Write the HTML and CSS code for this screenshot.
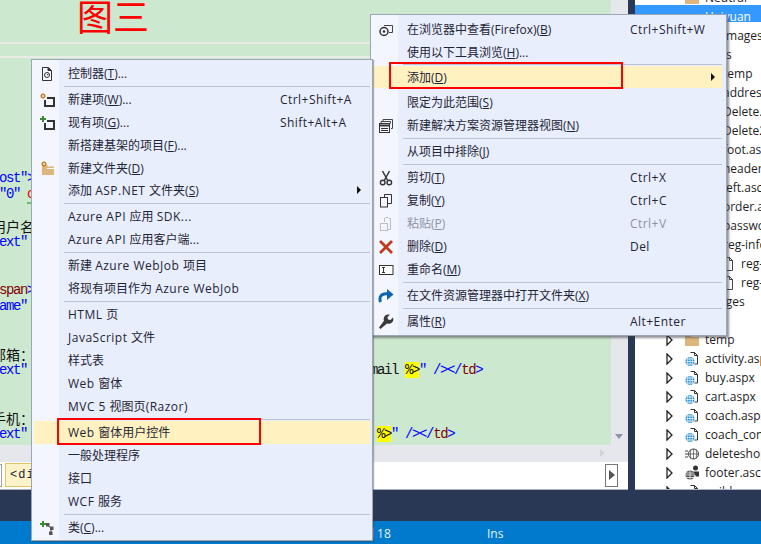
FILE: index.html
```html
<!DOCTYPE html>
<html lang="zh-CN">
<head>
<meta charset="utf-8">
<title>添加 Web 窗体用户控件</title>
<link rel="stylesheet" href="styles.css">
</head>
<body>
<svg class="defs" width="0" height="0" aria-hidden="true">
  <symbol id="page" viewBox="0 0 14 16">
    <path d="M5.500 1.500h4l3 3v8.500h-3M9.500 1.500v3h3" fill="none" stroke="#333" stroke-width="1"/>
    <circle cx="5" cy="10.500" r="4.500" fill="#1e88d0"/>
    <path d="M.5 10.500h9M.8 8h8.400M.8 13h8.400M5 6v9M3 6.500q-1 4 0 8M7 6.500q1 4 0 8" fill="none" stroke="#fff" stroke-width=".7"/>
  </symbol>
  <symbol id="tw" viewBox="0 0 7 12">
    <path d="M1 1l5 5-5 5z" fill="#fff" stroke="#222" stroke-width="1.300"/>
  </symbol>
  <symbol id="folder" viewBox="0 0 14 13">
    <path d="M0 2h5l1 2h8v9H0z" fill="#dcb67a"/>
  </symbol>
  <symbol id="doc" viewBox="0 0 14 16">
    <path d="M3.500 1.500h5l3 3v10h-8zM8.500 1.500v3h3" fill="#fff" stroke="#444"/>
  </symbol>
</svg>

<div class="app">
  <div class="main">
    <section class="editor">
      <div class="editor-top">
        <div class="code">
          <div class="curline"></div>
          <div class="lines">
            <div class="ln"><span class="b">ost"&gt;</span></div>
            <div class="ln"><span class="b">"0" </span><span class="err">c</span></div>
            <div class="ln"></div>
            <div class="ln"><span class="cn">用户名</span></div>
            <div class="ln"><span class="b">ext"</span></div>
            <div class="ln"></div>
            <div class="ln"></div>
            <div class="ln"><span class="m">span</span><span class="b">&gt;</span></div>
            <div class="ln"><span class="b">ame"</span></div>
            <div class="ln"></div>
            <div class="ln"></div>
            <div class="ln"><span class="cn">邮箱：</span></div>
            <div class="ln"><span class="b">ext"</span>                                                 mail <span class="y">%&gt;</span><span class="b">" /&gt;&lt;/</span><span class="m">td</span><span class="b">&gt;</span></div>
            <div class="ln"></div>
            <div class="ln"></div>
            <div class="ln"><span class="cn">手机：</span></div>
            <div class="ln"><span class="b">ext"</span>                                                  <span class="y">%&gt;</span><span class="b">" /&gt;&lt;/</span><span class="m">td</span><span class="b">&gt;</span></div>
          </div>
        </div>
        <div class="vscroll"><i class="tri-down"></i></div>
      </div>
      <div class="hscroll"><i class="tri-right"></i></div>
      <div class="navbar">
        <div class="nav-left"></div>
        <div class="tag">&lt;div&gt;</div>
        <div class="nav-btn"><i class="tri-nav"></i></div>
      </div>
    </section>

    <aside class="explorer">
      <div class="tree">
        <div class="row"><span class="tw"></span><svg class="ic" width="14" height="13"><use href="#folder"/></svg><span>Neutral</span></div>
        <div class="row sel"><span class="tw"></span><span class="ic"></span><span>Haiyuan</span></div>
        <div class="row l2"><span>images</span></div>
        <div class="row l2"><span>js</span></div>
        <div class="row l2"><span>temp</span></div>
        <div class="row l2"><span>address.aspx</span></div>
        <div class="row l2"><span>Delete.aspx</span></div>
        <div class="row l2"><span>Delete2.aspx</span></div>
        <div class="row l2"><span>foot.ascx</span></div>
        <div class="row l2"><span>header.ascx</span></div>
        <div class="row l2"><span>left.ascx</span></div>
        <div class="row l2"><span>order.aspx</span></div>
        <div class="row l2"><span>password.aspx</span></div>
        <div class="row l2"><span>reg-info.aspx</span></div>
        <div class="row l3"><svg class="ic" width="14" height="16"><use href="#doc"/></svg><span>reg-info.aspx.cs</span></div>
        <div class="row l3"><svg class="ic" width="14" height="16"><use href="#doc"/></svg><span>reg-info.designer.cs</span></div>
        <div class="row"><span class="tw"></span><span class="ic"></span><span>images</span></div>
        <div class="row"><span class="tw"></span><span class="ic"></span><span>js</span></div>
        <div class="row"><svg class="tw" width="7" height="12"><use href="#tw"/></svg><svg class="ic" width="14" height="13"><use href="#folder"/></svg><span>temp</span></div>
        <div class="row"><svg class="tw" width="7" height="12"><use href="#tw"/></svg><svg class="ic" width="14" height="16"><use href="#page"/></svg><span>activity.aspx</span></div>
        <div class="row"><svg class="tw" width="7" height="12"><use href="#tw"/></svg><svg class="ic" width="14" height="16"><use href="#page"/></svg><span>buy.aspx</span></div>
        <div class="row"><svg class="tw" width="7" height="12"><use href="#tw"/></svg><svg class="ic" width="14" height="16"><use href="#page"/></svg><span>cart.aspx</span></div>
        <div class="row"><svg class="tw" width="7" height="12"><use href="#tw"/></svg><svg class="ic" width="14" height="16"><use href="#page"/></svg><span>coach.aspx</span></div>
        <div class="row"><svg class="tw" width="7" height="12"><use href="#tw"/></svg><svg class="ic" width="14" height="16"><use href="#page"/></svg><span>coach_content.aspx</span></div>
        <div class="row"><svg class="tw" width="7" height="12"><use href="#tw"/></svg><svg class="ic" width="14" height="14" viewBox="0 0 14 14"><path d="M0 4h3M0 7h3M0 10h3" stroke="#444"/><circle cx="8.500" cy="7" r="5" fill="none" stroke="#444"/><path d="M3.500 7h10M8.500 2v10M6 2.500q-1.500 4.500 0 9M11 2.500q1.500 4.500 0 9" fill="none" stroke="#444" stroke-width=".7"/></svg><span>deleteshop.ashx</span></div>
        <div class="row"><svg class="tw" width="7" height="12"><use href="#tw"/></svg><svg class="ic" width="14" height="15" viewBox="0 0 14 15"><circle cx="5" cy="10" r="4.500" fill="#555"/><path d="M.5 10h9M5 5.500v9M.9 8h8.200M.9 12.500h8.200" stroke="#fff" stroke-width=".7"/><circle cx="10.500" cy="3" r="2.500" fill="#333"/><path d="M8 6.500h6v5h-3z" fill="#333"/></svg><span>footer.ascx</span></div>
        <div class="row"><svg class="tw" width="7" height="12"><use href="#tw"/></svg><svg class="ic" width="14" height="16"><use href="#page"/></svg><span>guild.aspx</span></div>
      </div>
    </aside>
  </div>
  <div class="dock"></div>
  <footer class="status"><span class="st-col">列 18</span><span class="st-ins">Ins</span></footer>
</div>

<div class="title-note">图三</div>

<nav class="menu menu-right">
  <div class="it"><svg class="mi" viewBox="0 0 16 16"><path d="M6 3.500h8.500v7H11" fill="none" stroke="#444"/><circle cx="6" cy="9.500" r="4" fill="none" stroke="#333" stroke-width="1.500"/><circle cx="6" cy="9.500" r="1.300" fill="#333"/></svg><span class="lb">在浏览器中查看(Firefox)(<u>B</u>)</span><span class="sc">Ctrl+Shift+W</span></div>
  <div class="it"><span class="mi"></span><span class="lb">使用以下工具浏览(<u>H</u>)...</span></div>
  <div class="sep sep-thin"></div>
  <div class="it hl short"><span class="mi"></span><span class="lb">添加(<u>D</u>)</span><i class="arrow"></i></div>
  <div class="gap"></div>
  <div class="it"><span class="mi"></span><span class="lb">限定为此范围(<u>S</u>)</span></div>
  <div class="it"><svg class="mi" viewBox="0 0 16 16"><path d="M5 3.500V1.500h9.500v9H13" fill="none" stroke="#444"/><path d="M3 5.500V3.500h9.500v2" fill="none" stroke="#444"/><rect x="1.500" y="5.500" width="10" height="9" fill="#f3f6fe" stroke="#333"/><path d="M1.500 7.500h10" stroke="#333" stroke-width="2"/><path d="M3 10.500h7M3 12.500h7" stroke="#333"/></svg><span class="lb">新建解决方案资源管理器视图(<u>N</u>)</span></div>
  <div class="sep"></div>
  <div class="it"><span class="mi"></span><span class="lb">从项目中排除(<u>J</u>)</span></div>
  <div class="sep"></div>
  <div class="it"><svg class="mi" viewBox="0 0 16 16"><path d="M4.500 1l5.500 10M11.500 1L6 11" fill="none" stroke="#333" stroke-width="1.500"/><circle cx="4.700" cy="12.500" r="2.300" fill="none" stroke="#333" stroke-width="1.400"/><circle cx="11.300" cy="12.500" r="2.300" fill="none" stroke="#333" stroke-width="1.400"/></svg><span class="lb">剪切(<u>T</u>)</span><span class="sc">Ctrl+X</span></div>
  <div class="it"><svg class="mi" viewBox="0 0 16 16"><path d="M6.500 4V1.500h7v9H10" fill="none" stroke="#333"/><rect x="2.500" y="4.500" width="7" height="9.500" fill="none" stroke="#333"/></svg><span class="lb">复制(<u>Y</u>)</span><span class="sc">Ctrl+C</span></div>
  <div class="it dis"><svg class="mi" viewBox="0 0 16 16"><path d="M6.500 6V2.500l1.500-1 2 0 1 1h1.500v11H10" fill="none" stroke="#bdbdc4"/><rect x="2.500" y="7.500" width="7" height="7" fill="none" stroke="#bdbdc4"/></svg><span class="lb">粘贴(<u>P</u>)</span><span class="sc">Ctrl+V</span></div>
  <div class="it"><svg class="mi" viewBox="0 0 16 16"><path d="M2 2l12 12M14 2L2 14" stroke="#c0391c" stroke-width="2.800"/></svg><span class="lb">删除(<u>D</u>)</span><span class="sc">Del</span></div>
  <div class="it"><svg class="mi" viewBox="0 0 16 16"><rect x="1.500" y="3.500" width="13.500" height="9" fill="#fff" stroke="#333"/><path d="M4 5.500h3M4 10.500h3M5.500 5.500v5" stroke="#333"/></svg><span class="lb">重命名(<u>M</u>)</span></div>
  <div class="sep"></div>
  <div class="it"><svg class="mi" viewBox="0 0 16 16"><path d="M2.500 14q-2-6.500 3.500-8q3-.5 5 0" fill="none" stroke="#0e64ad" stroke-width="3"/><path d="M9 1l6.500 5.500L9 12z" fill="#0e64ad"/></svg><span class="lb">在文件资源管理器中打开文件夹(<u>X</u>)</span></div>
  <div class="sep"></div>
  <div class="it"><svg class="mi" viewBox="0 0 16 16"><path d="M1 13.500l1.500 1.500 6.500-5.500q3 1 5-1t1-5l-2.500 2.500-2.500-.5-.5-2.500L12 .8q-3-1-5 1t-1 5z" fill="#3a3a3a"/></svg><span class="lb">属性(<u>R</u>)</span><span class="sc">Alt+Enter</span></div>
</nav>

<nav class="menu menu-left">
  <div class="it"><svg class="mi" viewBox="0 0 16 16"><path d="M3.500 1.500h6l3 3v10h-9z" fill="#f3f6fe" stroke="#333"/><path d="M9 1.500v3h3.500" fill="#333" stroke="#333"/><circle cx="8" cy="9" r="2.500" fill="none" stroke="#333"/><path d="M8 9l1.500-1" stroke="#333"/></svg><span class="lb">控制器(<u>T</u>)...</span></div>
  <div class="sep"></div>
  <div class="it"><svg class="mi" viewBox="0 0 16 16"><path d="M4 1v6M1 4h6M2 2l4 4M6 2L2 6" stroke="#c27d1a"/><circle cx="4" cy="4" r="1.500" fill="#f3f6fe" stroke="#c27d1a"/><path d="M8 6h7v8H6V8" fill="#f3f6fe" stroke="#333" stroke-width="2"/></svg><span class="lb">新建项(<u>W</u>)...</span><span class="sc">Ctrl+Shift+A</span></div>
  <div class="it"><svg class="mi" viewBox="0 0 16 16"><path d="M4 1v6M1 4h6" stroke="#388a34" stroke-width="2"/><path d="M8 6h7v8H6V8" fill="#f3f6fe" stroke="#333" stroke-width="2"/></svg><span class="lb">现有项(<u>G</u>)...</span><span class="sc">Shift+Alt+A</span></div>
  <div class="it"><span class="mi"></span><span class="lb">新搭建基架的项目(<u>F</u>)...</span></div>
  <div class="it short"><svg class="mi" viewBox="0 0 16 16"><path d="M3 5h5l1 1.500h6V15H3z" fill="#dcb67a"/><path d="M8 8.500h7" stroke="#f3f6fe"/><path d="M5 1v6M2 4h6M3 2l4 4M7 2L3 6" stroke="#c27d1a"/><circle cx="5" cy="4" r="1.500" fill="#f3f6fe" stroke="#c27d1a"/></svg><span class="lb">新建文件夹(<u>D</u>)</span></div>
  <div class="it"><span class="mi"></span><span class="lb">添加 <span class="la">ASP.NET </span>文件夹(<u>S</u>)</span><i class="arrow"></i></div>
  <div class="sep"></div>
  <div class="it"><span class="mi"></span><span class="lb"><span class="la">Azure API </span>应用 <span class="la">SDK...</span></span></div>
  <div class="it"><span class="mi"></span><span class="lb"><span class="la">Azure API </span>应用客户端...</span></div>
  <div class="sep"></div>
  <div class="it"><span class="mi"></span><span class="lb">新建 <span class="la">Azure WebJob </span>项目</span></div>
  <div class="it"><span class="mi"></span><span class="lb">将现有项目作为 <span class="la">Azure WebJob</span></span></div>
  <div class="sep"></div>
  <div class="it"><span class="mi"></span><span class="lb"><span class="la">HTML </span>页</span></div>
  <div class="it"><span class="mi"></span><span class="lb"><span class="la">JavaScript </span>文件</span></div>
  <div class="it"><span class="mi"></span><span class="lb">样式表</span></div>
  <div class="it"><span class="mi"></span><span class="lb"><span class="la">Web </span>窗体</span></div>
  <div class="it"><span class="mi"></span><span class="lb"><span class="la">MVC 5 </span>视图页<span class="la">(Razor)</span></span></div>
  <div class="sep"></div>
  <div class="it hl"><span class="mi"></span><span class="lb"><span class="la">Web </span>窗体用户控件</span></div>
  <div class="it"><span class="mi"></span><span class="lb">一般处理程序</span></div>
  <div class="it"><span class="mi"></span><span class="lb">接口</span></div>
  <div class="it"><span class="mi"></span><span class="lb"><span class="la">WCF </span>服务</span></div>
  <div class="sep"></div>
  <div class="it"><svg class="mi" viewBox="0 0 16 16"><path d="M4 1v6M1 4h6" stroke="#388a34" stroke-width="2"/><path d="M8 5l4 3M12 8v4" stroke="#555"/><rect x="7" y="3" width="3.500" height="3.500" fill="#555"/><rect x="11" y="6.500" width="3.500" height="3.500" fill="#555"/><rect x="10" y="11.500" width="3.500" height="3.500" fill="#555"/></svg><span class="lb">类(<u>C</u>)...</span></div>
</nav>

<div class="mark mark-add"></div>
<div class="mark mark-web"></div>
</body>
</html>
```

FILE: styles.css
```css
* { box-sizing: border-box; }
html, body { margin: 0; padding: 0; }
body {
  width: 761px;
  height: 544px;
  overflow: hidden;
  position: relative;
  font: 12px/19px "Open Sans", "Noto Sans CJK SC", sans-serif;
  color: #1e2536;
  background: #293955;
}
.defs { position: absolute; }
.app { display: flex; flex-direction: column; height: 544px; }
.main { display: flex; gap: 7px; height: 490px; }

/* editor */
.editor { width: 628px; display: flex; flex-direction: column; border-bottom: 1px solid #a9b2c2; background: #fff; }
.editor-top { display: flex; height: 445px; }
.code {
  width: 611px;
  background: #cce8cf;
  padding-top: 42px;
  overflow: hidden;
  font: 14px/16px "Liberation Mono", monospace;
  letter-spacing: -1.400px;
  color: #111;
}
.curline { height: 16px; border-top: 2px solid #e8ece4; border-bottom: 2px solid #e8ece4; margin: 0 0 112px; }
.lines { margin-left: -1px; }
.ln { height: 16px; white-space: pre; }
.b { color: #0000ff; }
.m { color: #800000; }
.err { color: #e00; border-bottom: 2px solid #6abf69; }
.y { background: #ffff00; }
.cn { font: 14px/16px "Noto Sans CJK SC", sans-serif; letter-spacing: 0; margin-left: -7px; display: inline-block; vertical-align: 2px; }
.vscroll { flex: 1; background: #e6e7ed; position: relative; }
.tri-down { position: absolute; left: 4px; top: 434px; border: 4.500px solid transparent; border-top: 5px solid #8b93a5; border-bottom: 0; }
.hscroll { height: 17px; background: #e6e7ed; position: relative; }
.tri-right { position: absolute; left: 600px; top: 4px; border: 4.500px solid transparent; border-left: 5px solid #d0d3dd; border-right: 0; }
.navbar { flex: 1; display: flex; align-items: center; padding: 0 10px 1px 0; gap: 3px; }
.nav-left { width: 2px; height: 23px; border: 1px solid #a0a0a0; border-left: 0; }
.tag { width: 200px; height: 24px; background: #fdf3c9; border: 1px solid #e5c365; padding: 2px 0 0 4px; font: 12px/19px "Liberation Mono", monospace; letter-spacing: 1px; }
.nav-btn { margin-left: auto; width: 13px; height: 23px; border: 1px solid #777; display: flex; align-items: center; justify-content: center; }
.tri-nav { border: 5px solid transparent; border-left: 6px solid #555; border-right: 0; }

/* explorer */
.explorer { flex: 1; background: #fff; overflow: hidden; border-bottom: 1px solid #a9b2c2; }
.tree { margin-top: -15px; }
.row { height: 19px; display: flex; align-items: center; padding: 6px 0 0 31px; white-space: nowrap; color: #1e1e1e; }
.tw { width: 7px; margin-right: 12px; flex: none; }
.ic { width: 14px; margin-right: 6px; flex: none; }
.sel { background: linear-gradient(transparent 1px, #3399ff 1px, #3399ff 18px, transparent 18px); color: #fff; }
.l2 { padding-left: 88px; }
.l3 { padding-left: 86px; }

/* below */
.dock { height: 31px; }
.status { height: 23px; background: #007acc; color: #e8f2fa; display: flex; align-items: center; padding: 1px 0 0 362px; }
.st-col { width: 125px; }

/* overlay annotation */
.title-note { position: absolute; left: 77px; top: -9px; font: 36px/48px "Noto Sans CJK SC", sans-serif; color: #f00; }

/* context menus */
.menu {
  position: absolute;
  border: 1px solid #9ba7b7;
  background: linear-gradient(90deg, #f3f6fe 27px, #e9eefc 27px);
}
.menu-right { left: 370px; top: 14px; width: 357px; height: 322px; padding: 3px 4px 2px 0; box-shadow: 2px 2px 2px rgba(60, 60, 70, .55); }
.menu-left { left: 31px; top: 59px; width: 342px; height: 482px; padding: 2px 2px; box-shadow: 1px 1px 1px rgba(60, 60, 70, .4); }
.it { height: 23px; display: flex; align-items: center; white-space: nowrap; position: relative; }
.short { height: 22px; }
.mi { width: 16px; height: 16px; margin-left: 7px; margin-right: 13px; flex: none; display: block; }
.menu-left .mi { margin-left: 5px; }
.lb { flex: none; width: 223px; }
.menu-left .lb { width: 212px; }
.la { letter-spacing: .5px; }
.sc { flex: none; letter-spacing: .45px; }
.hl { background: #fff2c0; }
.dis { color: #8d94a3; }
.arrow { position: absolute; top: 7px; border: 4px solid transparent; border-left: 4px solid #111; border-right: 0; }
.menu-left .arrow { left: 323px; }
.menu-right .arrow { left: 340px; }
.sep { height: 3px; margin-left: 32px; background: linear-gradient(#bcc3d0, #bcc3d0) 0 1px / 100% 1px no-repeat; }
.menu-left .sep { margin-left: 30px; }
.sep-thin { height: 2px; background-position: 0 0; }
.gap { height: 3px; }
u { text-decoration-thickness: 1px; text-underline-offset: 1px; }

/* red annotation boxes */
.mark { position: absolute; border: 2px solid #f00; }
.mark-add { left: 389px; top: 62px; width: 234px; height: 27px; }
.mark-web { left: 57px; top: 418px; width: 204px; height: 27px; }
```
